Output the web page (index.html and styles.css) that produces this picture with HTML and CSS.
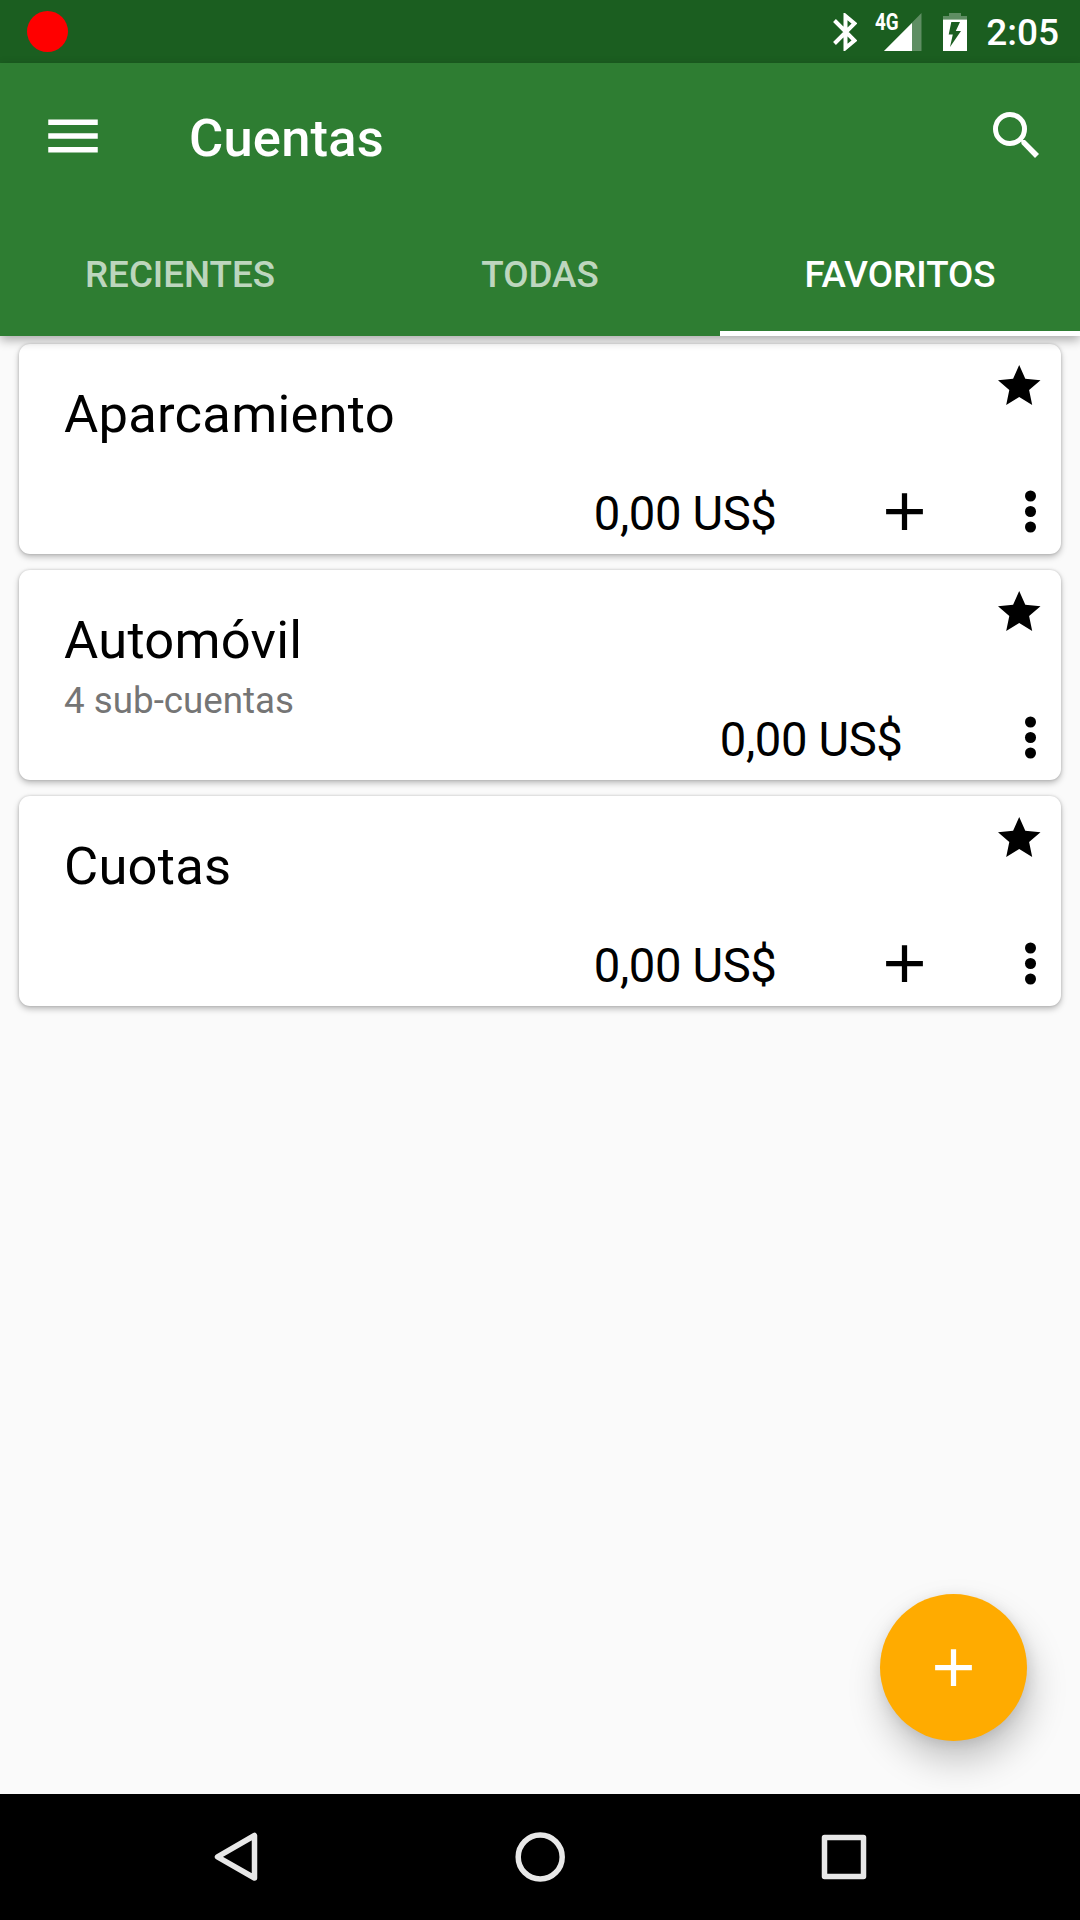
FILE: index.html
```html
<!DOCTYPE html>
<html lang="es">
<head>
<meta charset="utf-8">
<title>Cuentas</title>
<link rel="stylesheet" href="styles.css">
</head>
<body>
<div class="screen">
  <header class="status">
    <span class="record"></span>
    <div class="status-icons">
      <svg class="bluetooth" viewBox="0 0 24 38"><path d="M1.500 7.500 21.500 27.500 12.500 35V3L21.500 10.500 1.500 30.500" fill="none" stroke="#fff" stroke-width="4"/></svg>
      <div class="signal">
        <svg viewBox="0 0 38 38"><path d="M0 38 37.500 0V38Z" fill="#fff" fill-opacity=".3"/><path d="M0 38 28 10V38Z" fill="#fff"/></svg>
        <span class="network">4G</span>
      </div>
      <svg class="battery" viewBox="0 0 24 38"><path d="M6 0H18V3H24V6.500H0V3H6Z" fill="#fff" fill-opacity=".3"/><path fill-rule="evenodd" d="M0 6.500H24V38H0ZM8.300 9 5.700 21.500H9.800L7 34 18 18H12.800L17 9Z" fill="#fff"/></svg>
      <span class="clock">2:05</span>
    </div>
  </header>
  <div class="appbar">
    <div class="toolbar">
      <svg class="menu" viewBox="0 0 24 24"><path d="M3 6H21V8H3ZM3 11H21V13H3ZM3 16H21V18H3Z" fill="#fff"/></svg>
      <h1 class="title">Cuentas</h1>
      <svg class="search" viewBox="0 0 46 46"><circle cx="17" cy="17" r="14.500" fill="none" stroke="#fff" stroke-width="5"/><path d="M28 28H32L46 42 42 46 28.500 32Z" fill="#fff"/></svg>
    </div>
    <nav class="tabs">
      <span class="tab">RECIENTES</span>
      <span class="tab">TODAS</span>
      <span class="tab active">FAVORITOS</span>
    </nav>
  </div>
  <main class="list">
    <article class="card">
      <div class="info"><h2 class="name">Aparcamiento</h2></div>
      <svg class="star" viewBox="0 0 42.500 40"><path d="M21.200 0 27.300 13.700 42.500 15.300 31.100 25 34.200 40 21.200 32 8.200 40 11.300 25 0 15.300 15.100 13.700Z"/></svg>
      <div class="actions">
        <span class="balance">0,00 US$</span>
        <svg class="icon add" viewBox="0 0 24 24"><path d="M19 13H13V19H11V13H5V11H11V5H13V11H19Z"/></svg>
        <svg class="icon" viewBox="0 0 24 24"><circle cx="12" cy="6.100" r="2.100"/><circle cx="12" cy="12" r="2.100"/><circle cx="12" cy="17.900" r="2.100"/></svg>
      </div>
    </article>
    <article class="card">
      <div class="info"><h2 class="name">Automóvil</h2><p class="sub">4 sub-cuentas</p></div>
      <svg class="star" viewBox="0 0 42.500 40"><path d="M21.200 0 27.300 13.700 42.500 15.300 31.100 25 34.200 40 21.200 32 8.200 40 11.300 25 0 15.300 15.100 13.700Z"/></svg>
      <div class="actions">
        <span class="balance">0,00 US$</span>
        <svg class="icon" viewBox="0 0 24 24"><circle cx="12" cy="6.100" r="2.100"/><circle cx="12" cy="12" r="2.100"/><circle cx="12" cy="17.900" r="2.100"/></svg>
      </div>
    </article>
    <article class="card">
      <div class="info"><h2 class="name">Cuotas</h2></div>
      <svg class="star" viewBox="0 0 42.500 40"><path d="M21.200 0 27.300 13.700 42.500 15.300 31.100 25 34.200 40 21.200 32 8.200 40 11.300 25 0 15.300 15.100 13.700Z"/></svg>
      <div class="actions">
        <span class="balance">0,00 US$</span>
        <svg class="icon add" viewBox="0 0 24 24"><path d="M19 13H13V19H11V13H5V11H11V5H13V11H19Z"/></svg>
        <svg class="icon" viewBox="0 0 24 24"><circle cx="12" cy="6.100" r="2.100"/><circle cx="12" cy="12" r="2.100"/><circle cx="12" cy="17.900" r="2.100"/></svg>
      </div>
    </article>
    <div class="fab"><svg class="icon" viewBox="0 0 24 24"><path d="M19 13H13V19H11V13H5V11H11V5H13V11H19Z"/></svg></div>
  </main>
  <footer class="navbar">
    <svg class="nav-icon" viewBox="0 0 50 50"><path d="M43.500 3.500V46L6.500 24.800Z"/></svg>
    <svg class="nav-icon" viewBox="0 0 50 50"><circle cx="25.200" cy="25" r="22"/></svg>
    <svg class="nav-icon" viewBox="0 0 50 50"><rect x="5.500" y="5.500" width="39" height="39"/></svg>
  </footer>
</div>
</body>
</html>
```
FILE: styles.css
```css
* { box-sizing: border-box; margin: 0; }
body { font-family: Roboto, sans-serif; background: #fafafa; }
svg { display: block; flex: none; }
.screen { width: 1080px; height: 1920px; display: flex; flex-direction: column; overflow: hidden; }

.status { height: 63px; background: #1b5e20; display: flex; align-items: center; justify-content: space-between; padding: 0 21px 0 27px; flex: none; }
.record { width: 41px; height: 41px; border-radius: 50%; background: #f00; }
.status-icons { display: flex; align-items: center; color: #fff; }
.bluetooth { width: 24px; height: 38px; margin-right: 27px; }
.signal { position: relative; width: 38px; height: 38px; margin-right: 21px; }
.network { position: absolute; left: -9.5px; top: -2px; font-size: 23px; line-height: 24px; font-weight: 700; transform: scaleX(.82); transform-origin: 0 0; }
.battery { width: 24px; height: 38px; margin-right: 19px; }
.clock { font-size: 37px; font-weight: 500; line-height: 44px; padding-top: 3px; }

.appbar { background: #2e7d32; color: #fff; flex: none; position: relative; z-index: 1; box-shadow: 0 4px 10px rgba(0,0,0,.32); }
.toolbar { height: 147px; display: flex; align-items: center; padding: 0 41px 0 40px; }
.menu { width: 66px; height: 66px; margin-top: -1px; }
.title { font-size: 52.5px; font-weight: 500; line-height: 62px; letter-spacing: .2px; margin: 3px auto 0 83px; }
.search { width: 46px; height: 46px; margin-top: -4px; }
.tabs { height: 126px; display: grid; grid-template-columns: repeat(3, 1fr); }
.tab { display: flex; align-items: center; justify-content: center; font-size: 36.75px; font-weight: 500; color: rgba(255,255,255,.7); padding-top: 7px; border-bottom: 5px solid transparent; }
.tab.active { color: #fff; border-bottom-color: #fff; }

.list { flex: 1; padding: 8px 19px 0; display: flex; flex-direction: column; gap: 16px; position: relative; }
.card { height: 210px; background: #fff; border-radius: 11px; box-shadow: 0 3px 6px rgba(0,0,0,.25), 0 0 3px rgba(0,0,0,.18); display: grid; grid-template: 130px 80px / 1fr auto; padding: 0 0 0 45px; color: #000; }
.info { padding-top: 40px; white-space: nowrap; }
.name { font-size: 52.5px; font-weight: 400; line-height: 61px; letter-spacing: .25px; }
.sub { font-size: 36.75px; line-height: 43px; margin-top: 8px; color: #757575; }
.star { width: 42.5px; height: 40px; margin: 21px 20.5px 0 0; }
.actions { grid-column: 1 / 3; display: flex; align-items: center; justify-content: flex-end; height: 75px; }
.balance { font-size: 47.25px; line-height: 56px; letter-spacing: -.4px; margin: 5px 96px 0 0; }
.icon { width: 63px; height: 63px; }
.add + .icon { margin-left: 63px; }
.actions .icon:last-child { margin-right: -.5px; }

.fab { position: absolute; right: 53px; bottom: 53px; width: 147px; height: 147px; border-radius: 50%; background: #ffab00; display: flex; align-items: center; justify-content: center; fill: #fff; box-shadow: 4px 20px 36px rgba(0,0,0,.22), 1px 3px 14px rgba(0,0,0,.1); }

.navbar { height: 126px; background: #000; display: flex; align-items: center; justify-content: center; gap: 254px; flex: none; }
.nav-icon { width: 50px; height: 50px; fill: none; stroke: #e8e8e8; stroke-width: 5.5; stroke-linejoin: round; }
```
